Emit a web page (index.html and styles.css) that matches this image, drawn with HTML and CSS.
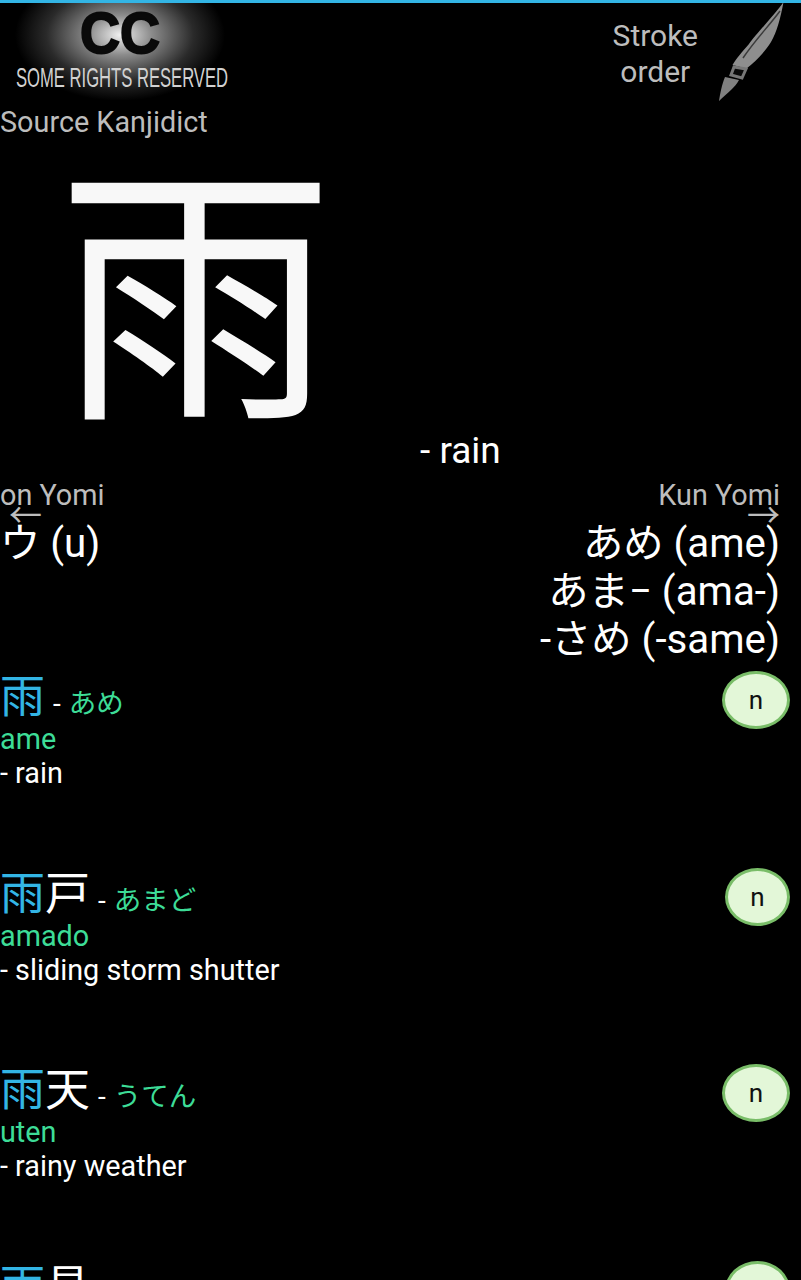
FILE: index.html
```html
<!doctype html>
<html lang="ja">
<head>
	<meta charset="UTF-8">
	<title>雨 - rain</title>
	<link rel="stylesheet" href="styles.css">
</head>
<body>
	<div id="page">
		<div class="topbar">
			<div class="license">
				<svg class="cc-logo" width="232" height="97" viewBox="0 0 232 97">
					<defs>
						<radialGradient id="glow" cx="50%" cy="50%" r="50%">
							<stop offset="0" stop-color="#f0f0f0"/>
							<stop offset="0.3" stop-color="#8c8c8c"/>
							<stop offset="0.7" stop-color="#2a2a2a"/>
							<stop offset="1" stop-color="#000"/>
						</radialGradient>
					</defs>
					<ellipse cx="120" cy="32" rx="105" ry="66" fill="url(#glow)"/>
					<text x="120" y="50" text-anchor="middle" class="cc-mark" textLength="80" lengthAdjust="spacingAndGlyphs">CC</text>
					<text x="16" y="84" class="cc-note" textLength="212" lengthAdjust="spacingAndGlyphs">SOME RIGHTS RESERVED</text>
				</svg>
			</div>
			<div class="stroke-link">
				<div class="stroke-label">Stroke<br>order</div>
				<svg class="pen" width="70" height="100" viewBox="0 0 70 100">
					<path d="M64.5 0 C58 10 38 31 30 42 C23 50 17 57 13.5 63 L27.5 66.5 C36 60 46 50 52 40 C58 30 62 14 64.5 0Z" fill="#8e8e8e"/>
					<path d="M61 9 C50 24 36 38 24 56" fill="none" stroke="#3a3a3a" stroke-width="1.5"/>
					<path d="M15 65 L27 67 L23 76 L12 73Z" fill="#0a0a0a" stroke="#777" stroke-width="3"/>
					<path d="M6 75 L20 78 C18 82 15 85 13 87 C9 91 4 95 0 99 C1 92 3 82 6 75Z" fill="#808080"/>
				</svg>
			</div>
		</div>
		<div class="source">Source Kanjidict</div>
		<div class="kanji">雨</div>
		<div class="meaning">- rain</div>
		<div class="yomi">
			<div class="yomi-col">
				<div class="yomi-title">on Yomi</div>
				<div class="arrow">←</div>
				<div class="reading">ウ (u)</div>
			</div>
			<div class="yomi-col yomi-right">
				<div class="yomi-title">Kun Yomi</div>
				<div class="arrow">→</div>
				<div class="reading">あめ (ame)</div>
				<div class="reading">あま− (ama-)</div>
				<div class="reading">-さめ (-same)</div>
			</div>
		</div>
		<div class="word">
			<div class="word-text">
				<div class="word-head"><span class="hit">雨</span><span class="dash">-</span><span class="kana">あめ</span></div>
				<div class="romaji">ame</div>
				<div class="gloss">- rain</div>
			</div>
			<div class="badge badge-wide">n</div>
		</div>
		<div class="word">
			<div class="word-text">
				<div class="word-head"><span class="hit">雨</span><span class="rest">戸</span><span class="dash">-</span><span class="kana">あまど</span></div>
				<div class="romaji">amado</div>
				<div class="gloss">- sliding storm shutter</div>
			</div>
			<div class="badge">n</div>
		</div>
		<div class="word">
			<div class="word-text">
				<div class="word-head"><span class="hit">雨</span><span class="rest">天</span><span class="dash">-</span><span class="kana">うてん</span></div>
				<div class="romaji">uten</div>
				<div class="gloss">- rainy weather</div>
			</div>
			<div class="badge badge-wide">n</div>
		</div>
		<div class="word">
			<div class="word-text">
				<div class="word-head"><span class="hit">雨</span><span class="rest">具</span><span class="dash">-</span><span class="kana">あまぐ</span></div>
				<div class="romaji">amagu</div>
				<div class="gloss">- rain gear</div>
			</div>
			<div class="badge">n</div>
		</div>
	</div>
</body>
</html>
```

FILE: styles.css
```css
html, body {
	margin: 0;
	height: 1280px;
	overflow: hidden;
	background: #000;
}
#page {
	height: 1280px;
	overflow: hidden;
	border-top: 3px solid #33b5e5;
	box-sizing: border-box;
	font-family: Roboto, "Noto Sans CJK JP", sans-serif;
	color: #fff;
}
.topbar {
	display: flex;
	justify-content: space-between;
	height: 100px;
}
.license {
	width: 232px;
}
.cc-logo {
	display: block;
}
.cc-mark {
	font-family: "Liberation Sans", sans-serif;
	font-weight: bold;
	font-size: 58px;
	fill: #0a0a0a;
	stroke: #0a0a0a;
	stroke-width: 2px;
}
.cc-note {
	font-family: "Liberation Sans", sans-serif;
	font-size: 28px;
	fill: #d2d2d2;
}
.stroke-link {
	display: flex;
	gap: 21px;
	padding-right: 12px;
}
.stroke-label {
	font-size: 30px;
	line-height: 36px;
	color: #bdbdbd;
	text-align: center;
	padding-top: 15px;
}
.pen {
	display: block;
	margin-top: -1px;
}
.source {
	font-size: 28.8px;
	line-height: 38px;
	color: #bdbdbd;
}
.kanji {
	font-size: 277px;
	line-height: 326px;
	height: 287px;
	padding-left: 57px;
	color: #f8f8f8;
}
.meaning {
	font-size: 37px;
	line-height: 46px;
	padding-left: 420px;
}
.yomi {
	display: flex;
	justify-content: space-between;
	padding-right: 21px;
	height: 197px;
}
.yomi-col {
	display: flex;
	flex-direction: column;
	align-items: flex-start;
}
.yomi-right {
	align-items: flex-end;
}
.yomi-title {
	font-size: 28.8px;
	line-height: 36px;
	color: #bdbdbd;
	margin-top: 3px;
	margin-bottom: -5px;
}
.arrow {
	font-family: "Noto Sans CJK JP", sans-serif;
	font-size: 33px;
	line-height: 10px;
	height: 12px;
	color: #bdbdbd;
	padding-left: 9px;
}
.yomi-right .arrow {
	padding-left: 0;
}
.reading {
	font-size: 40.3px;
	line-height: 48px;
}
.word {
	display: flex;
	justify-content: space-between;
	align-items: flex-start;
	height: 196.5px;
	padding-right: 11px;
}
.word-head {
	display: flex;
	align-items: baseline;
	height: 50px;
	line-height: 54px;
}
.hit, .rest {
	font-size: 45px;
}
.hit {
	color: #33b5e5;
}
.dash {
	font-size: 28px;
	padding: 0 8px;
}
.kana {
	font-size: 27.5px;
	color: #3ddc97;
}
.romaji {
	font-size: 28.8px;
	line-height: 36px;
	color: #3ddc97;
}
.gloss {
	font-size: 28.8px;
	line-height: 32px;
}
.badge {
	width: 59px;
	height: 52px;
	border: 3px solid #79bd68;
	border-radius: 50%;
	background: #e3f7d8;
	color: #111;
	font-size: 26px;
	display: flex;
	align-items: center;
	justify-content: center;
}
.badge-wide {
	width: 62px;
}
```
